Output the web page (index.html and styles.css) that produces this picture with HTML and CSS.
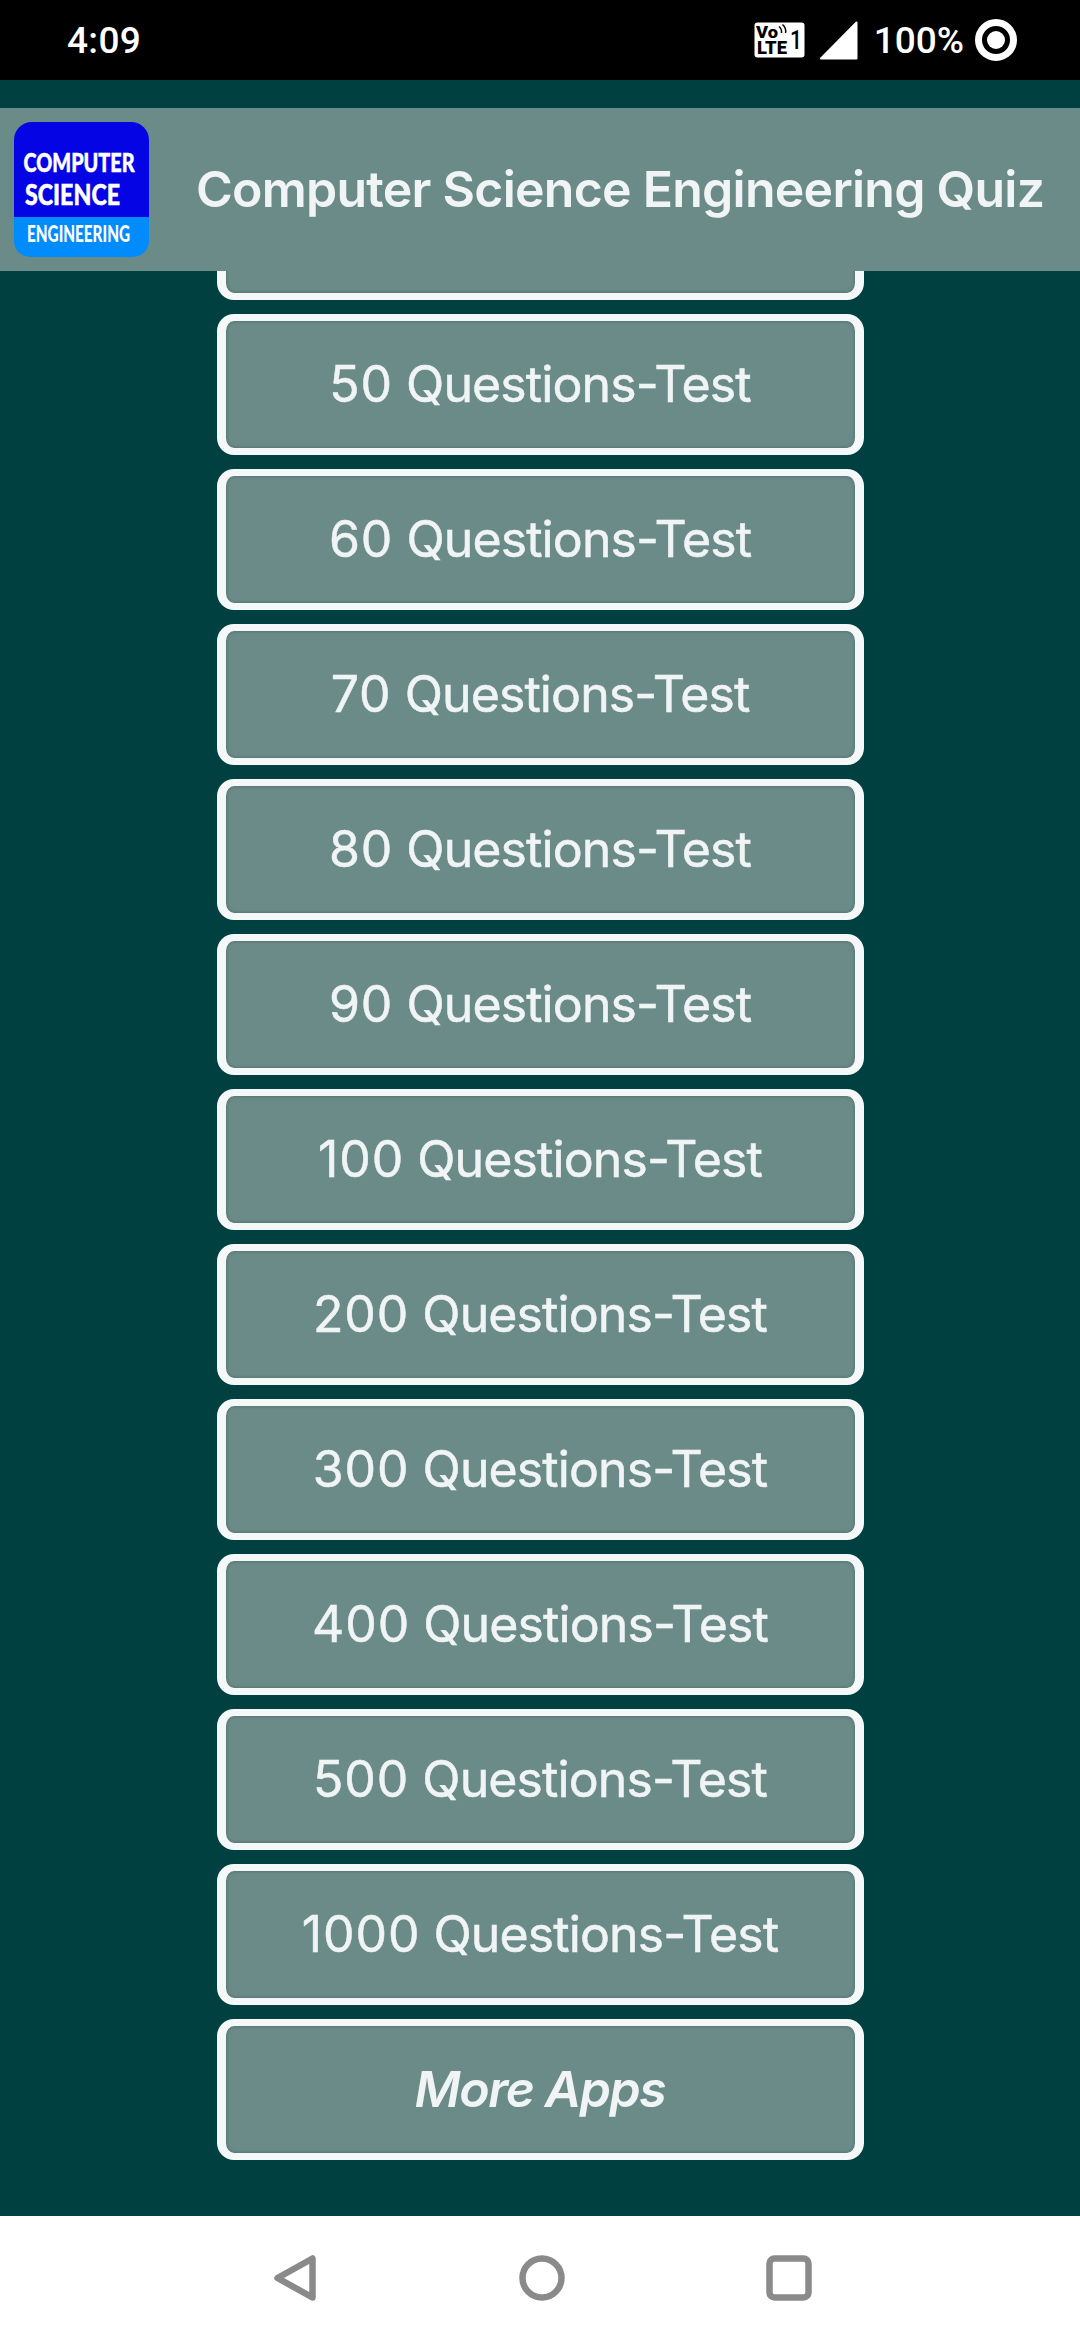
FILE: index.html
```html
<!DOCTYPE html>
<html lang="en">
<head>
<meta charset="utf-8">
<title>Computer Science Engineering Quiz</title>
<link rel="stylesheet" href="styles.css">
</head>
<body>
<div class="status">
  <span class="clock">4:09</span>
  <div class="indicators">
    <svg class="volte" width="51" height="36" viewBox="0 0 51 36">
      <rect x="0.5" y="0.5" width="50" height="35" rx="3" fill="#fff"/>
      <g class="volte-text">
        <text x="2" y="16" font-size="17" textLength="22" lengthAdjust="spacingAndGlyphs">Vo</text>
        <text x="3" y="32" font-size="17.5" textLength="30" lengthAdjust="spacingAndGlyphs">LTE</text>
      </g>
      <text class="sim" x="36" y="27" font-size="25" textLength="12" lengthAdjust="spacingAndGlyphs">1</text>
      <path d="M25 4.500Q28 7 27.500 11M28.500 2.500Q32.500 6 31.500 11" fill="none" stroke="#000" stroke-width="1.500"/>
    </svg>
    <svg class="signal" width="38" height="39" viewBox="0 0 38 39"><path d="M1 37.500L36.500 1.500V37.500Z" fill="#fff" stroke="#fff" stroke-width="2" stroke-linejoin="round"/></svg>
    <span class="percent">100%</span>
    <svg width="42" height="42" viewBox="0 0 42 42"><circle cx="21" cy="21" r="17.500" fill="none" stroke="#fff" stroke-width="7"/><circle cx="21" cy="21" r="9" fill="#fff"/></svg>
  </div>
</div>
<header class="header">
  <svg class="logo" width="135" height="135" viewBox="0 0 135 135">
    <path d="M0 95H135V119A16 16 0 0 1 119 135H16A16 16 0 0 1 0 119Z" fill="#008cfc"/>
    <path d="M0 95V18A18 18 0 0 1 18 0H117A18 18 0 0 1 135 18V95Z" fill="#0404e4"/>
    <g class="logo-text">
      <text x="9.500" y="50" font-size="26" textLength="111" lengthAdjust="spacingAndGlyphs">COMPUTER</text>
      <text x="11" y="83" font-size="29" textLength="95" lengthAdjust="spacingAndGlyphs">SCIENCE</text>
      <text class="logo-small" x="13" y="119.500" font-size="22" textLength="103" lengthAdjust="spacingAndGlyphs">ENGINEERING</text>
    </g>
  </svg>
  <h1 class="title">Computer Science Engineering Quiz</h1>
</header>
<main class="list">
  <button class="item"></button>
  <button class="item"><span class="count">50</span> Questions-Test</button>
  <button class="item"><span class="count">60</span> Questions-Test</button>
  <button class="item"><span class="count">70</span> Questions-Test</button>
  <button class="item"><span class="count">80</span> Questions-Test</button>
  <button class="item"><span class="count">90</span> Questions-Test</button>
  <button class="item"><span class="count">100</span> Questions-Test</button>
  <button class="item"><span class="count">200</span> Questions-Test</button>
  <button class="item"><span class="count">300</span> Questions-Test</button>
  <button class="item"><span class="count">400</span> Questions-Test</button>
  <button class="item"><span class="count">500</span> Questions-Test</button>
  <button class="item"><span class="count">1000</span> Questions-Test</button>
  <button class="item more">More Apps</button>
</main>
<nav class="nav">
  <svg width="46" height="46" viewBox="0 0 46 46"><path d="M40.500 3.500V42.500L5.500 23Z"/></svg>
  <svg width="46" height="46" viewBox="0 0 46 46"><circle cx="23" cy="23" r="19.500"/></svg>
  <svg width="46" height="46" viewBox="0 0 46 46"><rect x="3.500" y="3.500" width="39" height="39" rx="5"/></svg>
</nav>
</body>
</html>
```
FILE: styles.css
```css
* { box-sizing: border-box; }
body {
  margin: 0;
  width: 1080px;
  height: 2340px;
  display: flex;
  flex-direction: column;
  overflow: hidden;
  background: #004040;
  font-family: Inter, "Liberation Sans", sans-serif;
  color: #f0f4f5;
}
.status {
  height: 80px;
  flex: none;
  display: flex;
  align-items: center;
  justify-content: space-between;
  padding: 0 63px 0 67px;
  background: #000;
  color: #fff;
  font: 500 37px/44px Roboto, sans-serif;
}
.clock { padding-top: 2px; letter-spacing: 0.3px; }
.indicators { display: flex; align-items: center; }
.volte-text { font-family: Roboto, sans-serif; font-weight: 900; }
.sim { font-family: Roboto, sans-serif; font-weight: 500; }
.signal { margin: 0 16px 0 15px; }
.percent { margin-right: 11px; padding-top: 2px; }
.header {
  height: 163px;
  flex: none;
  margin-top: 28px;
  padding-left: 14px;
  display: flex;
  align-items: center;
  background: #6b8b88;
}
.logo-text {
  font-family: Lato, sans-serif;
  font-weight: 900;
  fill: #fff;
  stroke: #fff;
  stroke-width: 0.5;
}
.logo-small { stroke-width: 0; }
.title {
  margin: 0 0 0 47px;
  white-space: nowrap;
  font-size: 50px;
  font-weight: 600;
  line-height: 58px;
  padding-bottom: 2px;
  letter-spacing: -0.75px;
}
.list {
  flex: 1;
  min-height: 0;
  overflow: hidden;
  display: flex;
  flex-direction: column;
  justify-content: flex-end;
  align-items: center;
  gap: 14px;
  padding-bottom: 56px;
}
.item {
  width: 647px;
  height: 141px;
  flex: none;
  padding: 0 0 1px;
  border: solid #f4f8f8;
  border-width: 7px 9px;
  border-radius: 17px;
  background: #6b8b88;
  box-shadow: inset 0 0 3px 1px #587573;
  color: inherit;
  font: 400 50px/60px Inter, "Liberation Sans", sans-serif;
  letter-spacing: -0.9px;
  -webkit-text-stroke: 0.5px #f0f4f5;
}
.count { letter-spacing: 0.9px; }
.more { font-style: italic; font-weight: 600; letter-spacing: -1.4px; -webkit-text-stroke: 0; }
.nav {
  height: 124px;
  flex: none;
  display: flex;
  align-items: center;
  justify-content: center;
  gap: 201px;
  padding-left: 4px;
  background: #fff;
}
.nav svg { fill: none; stroke: #8a8a8a; stroke-width: 6.5; stroke-linejoin: round; }
```
